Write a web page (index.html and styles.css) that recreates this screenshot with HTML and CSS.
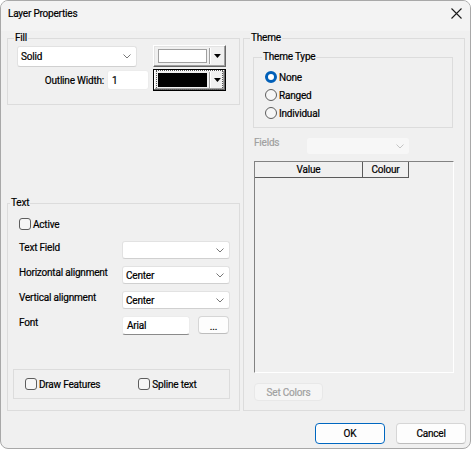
FILE: index.html
```html
<!DOCTYPE html>
<html lang="en">
<head>
    <meta charset="UTF-8">
    <meta name="viewport" content="width=device-width, initial-scale=1.0">
    <link rel="stylesheet" href="styles.css">
    <title>Layer Properties</title>
</head>
<body>
    <div class="window">
        <div class="titlebar">
            <span class="title">Layer Properties</span>
            <svg class="close" width="11" height="11" viewBox="0 0 11 11">
                <path d="M0.5 0.5 L10.5 10.5 M10.5 0.5 L0.5 10.5" stroke="#1b1b1b" stroke-width="1.1" fill="none"/>
            </svg>
        </div>

        <div class="content">
            <div class="col-left">
                <fieldset class="group fill-group">
                    <legend>Fill</legend>
                    <div class="fill-row">
                        <div class="combo fill-combo">
                            <span>Solid</span>
                            <svg class="chevron" width="8" height="5" viewBox="0 0 8 5"><path d="M0.5 0.5 L4 4 L7.5 0.5" stroke="#777" fill="none"/></svg>
                        </div>
                        <div class="color-btn fill-color">
                            <span class="swatch"></span>
                            <span class="sep"></span>
                            <svg class="arrow" width="7" height="4" viewBox="0 0 7 4"><path d="M0 0 H7 L3.5 4 Z" fill="#000"/></svg>
                        </div>
                    </div>
                    <div class="fill-row">
                        <span class="outline-label">Outline Width:</span>
                        <div class="textbox outline-input">1</div>
                        <div class="color-btn focused">
                            <span class="focus-rect">
                                <span class="swatch black"></span>
                                <span class="sep"></span>
                                <svg class="arrow" width="7" height="4" viewBox="0 0 7 4"><path d="M0 0 H7 L3.5 4 Z" fill="#000"/></svg>
                            </span>
                        </div>
                    </div>
                </fieldset>

                <fieldset class="group text-group">
                    <legend>Text</legend>
                    <div class="check-row active-row">
                        <span class="checkbox"></span>
                        <span>Active</span>
                    </div>
                    <div class="form-row first">
                        <span class="form-label">Text Field</span>
                        <div class="combo form-combo">
                            <span></span>
                            <svg class="chevron" width="8" height="5" viewBox="0 0 8 5"><path d="M0.5 0.5 L4 4 L7.5 0.5" stroke="#777" fill="none"/></svg>
                        </div>
                    </div>
                    <div class="form-row">
                        <span class="form-label">Horizontal alignment</span>
                        <div class="combo form-combo">
                            <span>Center</span>
                            <svg class="chevron" width="8" height="5" viewBox="0 0 8 5"><path d="M0.5 0.5 L4 4 L7.5 0.5" stroke="#777" fill="none"/></svg>
                        </div>
                    </div>
                    <div class="form-row">
                        <span class="form-label">Vertical alignment</span>
                        <div class="combo form-combo">
                            <span>Center</span>
                            <svg class="chevron" width="8" height="5" viewBox="0 0 8 5"><path d="M0.5 0.5 L4 4 L7.5 0.5" stroke="#777" fill="none"/></svg>
                        </div>
                    </div>
                    <div class="form-row font-row">
                        <span class="form-label">Font</span>
                        <div class="textbox font-input">Arial</div>
                        <div class="btn font-btn">...</div>
                    </div>
                    <div class="options-box">
                        <div class="check-row">
                            <span class="checkbox"></span>
                            <span>Draw Features</span>
                        </div>
                        <div class="check-row spline">
                            <span class="checkbox"></span>
                            <span>Spline text</span>
                        </div>
                    </div>
                </fieldset>
            </div>

            <fieldset class="group theme-group">
                <legend>Theme</legend>
                <fieldset class="group type-group">
                    <legend>Theme Type</legend>
                    <div class="radio-row">
                        <span class="radio checked"></span>
                        <span>None</span>
                    </div>
                    <div class="radio-row">
                        <span class="radio"></span>
                        <span>Ranged</span>
                    </div>
                    <div class="radio-row">
                        <span class="radio"></span>
                        <span>Individual</span>
                    </div>
                </fieldset>

                <div class="fields-row">
                    <span class="disabled-label">Fields</span>
                    <div class="combo fields-combo">
                        <span></span>
                        <svg class="chevron" width="8" height="5" viewBox="0 0 8 5"><path d="M0.5 0.5 L4 4 L7.5 0.5" stroke="#c4c4c4" fill="none"/></svg>
                    </div>
                </div>

                <div class="list">
                    <div class="list-header">
                        <div class="col-head value-col">Value</div>
                        <div class="col-head colour-col">Colour</div>
                    </div>
                </div>

                <div class="btn set-colors">Set Colors</div>
            </fieldset>
        </div>

        <div class="footer">
            <div class="btn dialog-btn default">OK</div>
            <div class="btn dialog-btn">Cancel</div>
        </div>
    </div>
</body>
</html>
```

FILE: styles.css
```css
* {
    box-sizing: border-box;
}

body {
    margin: 0;
    background-color: #ffffff;
    font-family: Roboto, "Noto Sans", sans-serif;
    font-size: 10px;
    letter-spacing: -0.2px;
    -webkit-text-stroke: 0.2px;
    color: #000;
}

.window {
    width: 471px;
    height: 449px;
    border: 1px solid #a8a8a8;
    border-radius: 8px;
    background-color: #f0f0f0;
    overflow: hidden;
    display: flex;
    flex-direction: column;
}

.titlebar {
    height: 30px;
    background-color: #f3f3f3;
    display: flex;
    align-items: center;
    justify-content: space-between;
    padding: 0 7px 5px 7px;
    flex-shrink: 0;
}

.close {
    margin-right: 1px;
}

.content {
    height: 380px;
    display: flex;
    gap: 3px;
    padding: 0 5px 0 6px;
    flex-shrink: 0;
}

/* group boxes */
.group {
    margin: 0;
    border: 1px solid #dcdcdc;
    border-radius: 0;
    min-width: 0;
}

.group legend {
    padding: 0 1px;
    margin-left: -3px;
    line-height: 14px;
    height: 14px;
}

.col-left {
    width: 233px;
    display: flex;
    flex-direction: column;
}

.fill-group {
    padding: 0 9px 13px 9px;
}

.fill-row {
    display: flex;
    align-items: center;
    height: 22px;
}

.fill-row + .fill-row {
    margin-top: 2px;
}

/* combo boxes */
.combo {
    display: flex;
    align-items: center;
    justify-content: space-between;
    background-color: #fff;
    border: 1px solid #e2e2e2;
    border-bottom-color: #d0d0d0;
    border-radius: 3px;
    padding: 0 5px 0 3px;
}

.chevron {
    flex-shrink: 0;
}

.fill-combo {
    width: 120px;
    height: 21px;
}

.textbox {
    background-color: #fff;
    border: 1px solid #ececec;
    border-bottom-color: #8a8a8a;
    border-radius: 3px;
    padding: 0 4px;
    display: flex;
    align-items: center;
}

.outline-label {
    width: 87px;
    text-align: right;
}

.outline-input {
    margin-left: 3px;
    width: 42px;
    height: 20px;
    border-bottom-color: #ececec;
}

/* classic colour picker buttons */
.color-btn {
    margin-left: 4px;
    width: 73px;
    height: 22px;
    display: flex;
    align-items: center;
    padding: 0 4px;
    border: 1px solid;
    border-color: #fff #696969 #696969 #fff;
    box-shadow: inset -1px -1px #a0a0a0, inset 1px 1px #e3e3e3;
}

.color-btn.fill-color {
    margin-left: 16px;
}

.swatch {
    width: 50px;
    height: 14px;
    background-color: #fff;
    border: 1px solid #a0a0a0;
}

.swatch.black {
    background-color: #000;
    border-color: #000;
}

.sep {
    width: 2px;
    height: 16px;
    margin-left: 2px;
    border-left: 1px solid #a0a0a0;
    border-right: 1px solid #fff;
}

.arrow {
    margin-left: 3px;
}

.color-btn.focused {
    border-color: #000;
    box-shadow: inset -1px -1px #696969, inset 1px 1px #fff, inset -2px -2px #a0a0a0;
    padding: 0 2px;
}

.focus-rect {
    display: flex;
    align-items: center;
    padding: 1px 1px;
    border: 1px dotted #555;
    width: 100%;
}

/* text group */
.text-group {
    margin-top: auto;
    padding: 0 9px 11px 5px;
}

.check-row {
    display: flex;
    align-items: center;
    gap: 2px;
    height: 14px;
}

.active-row {
    margin-top: 7px;
    padding-left: 6px;
}

.checkbox {
    width: 12px;
    height: 12px;
    border: 1px solid #5d5d5d;
    border-radius: 3px;
    background-color: #f6f6f6;
}

.form-row {
    display: flex;
    align-items: flex-start;
    height: 18px;
    margin-top: 7px;
    padding-left: 6px;
}

.form-row.first {
    margin-top: 10px;
}

.form-label {
    width: 103px;
    line-height: 13px;
    white-space: nowrap;
}

.form-combo {
    width: 108px;
    height: 18px;
}

.font-row {
    height: 19px;
}

.font-input {
    width: 68px;
    height: 19px;
}

.btn {
    display: flex;
    align-items: center;
    justify-content: center;
    background-color: #fdfdfd;
    border: 1px solid #d6d6d6;
    border-bottom-color: #bdbdbd;
    border-radius: 4px;
}

.font-btn {
    width: 31px;
    height: 18px;
    margin-left: 8px;
    padding-top: 3px;
}

.options-box {
    margin-top: 34px;
    height: 30px;
    border: 1px solid #dcdcdc;
    display: flex;
    align-items: center;
    padding-left: 11px;
}

.spline {
    margin-left: 38px;
}

/* theme group */
.theme-group {
    width: 222px;
    height: 380px;
    padding: 0 11px 0 9px;
}

.type-group {
    margin-top: 5px;
    padding: 4px 0 5px 11px;
}

.radio-row {
    display: flex;
    align-items: center;
    gap: 2px;
    height: 18px;
}

.radio {
    width: 12px;
    height: 12px;
    border-radius: 50%;
    border: 1px solid #5d5d5d;
    background-color: #f6f6f6;
}

.radio.checked {
    border: 3.5px solid #005fb8;
    background-color: #fff;
}

.fields-row {
    display: flex;
    align-items: flex-start;
    margin-top: 9px;
    height: 18px;
    padding-left: 1px;
}

.disabled-label {
    color: #a0a0a0;
    width: 52px;
    line-height: 12px;
}

.fields-combo {
    width: 104px;
    height: 18px;
    background-color: #f7f7f7;
    border-color: #f0f0f0;
}

.list {
    margin-top: 6px;
    margin-left: 1px;
    width: 200px;
    height: 212px;
    border: 1px solid;
    border-color: #828282 #ffffff #ffffff #828282;
}

.list-header {
    display: flex;
    height: 16px;
}

.col-head {
    text-align: center;
    line-height: 15px;
    border-right: 1px solid #5a5a5a;
    border-bottom: 1px solid #5a5a5a;
}

.value-col {
    width: 108px;
}

.colour-col {
    width: 46px;
}

.set-colors {
    margin-top: 10px;
    margin-left: 1px;
    width: 69px;
    height: 18px;
    color: #a0a0a0;
    background-color: #f5f5f5;
    border-color: #e8e8e8;
}

/* footer */
.footer {
    display: flex;
    justify-content: flex-end;
    gap: 11px;
    padding: 12px 4px 0 0;
}

.dialog-btn {
    width: 70px;
    height: 21px;
}

.dialog-btn.default {
    border: 1px solid #0067c0;
    box-shadow: inset 0 0 0 1px #ffffff;
}
```
